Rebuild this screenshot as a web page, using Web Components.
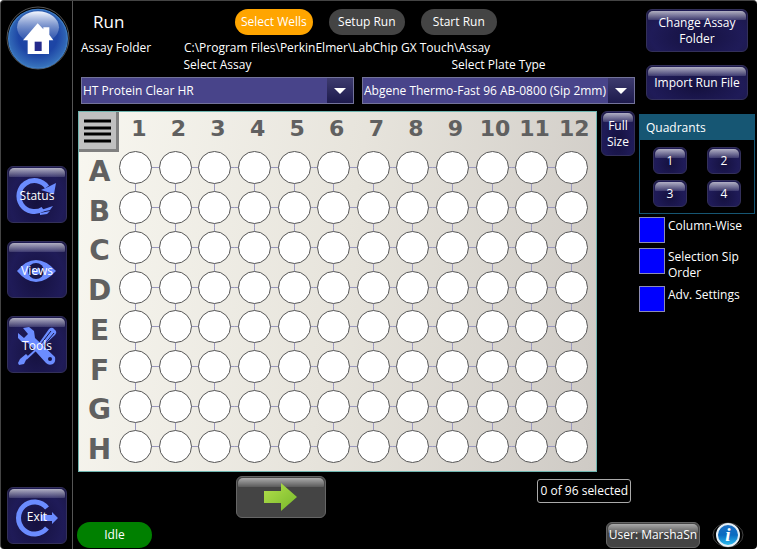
<!DOCTYPE html>
<html lang="en">
<head>
<meta charset="utf-8">
<title>Run</title>
<style>
  body {
    margin: 0;
    background: #fff;
    color: #fff;
    font: 12px/16px "Open Sans", "Noto Sans", sans-serif;
  }
</style>
</head>
<body>
<run-screen></run-screen>

<script>
// Small base class, every element only brings its own markup
class BaseElement extends HTMLElement {
  constructor() {
    super();
    this.attachShadow({ mode: 'open' });
  }

  connectedCallback() {
    this.shadowRoot.innerHTML = this.template();
  }
}

class GlossButton extends BaseElement {
  template() {
    const label = this.getAttribute('label');
    return `
      <style>
        :host { display: block; }
        button {
          display: grid;
          grid-template-rows: 100%;
          place-items: center;
          box-sizing: border-box;
          width: 100%;
          height: 100%;
          padding: 0;
          border: 1px solid #33305a;
          border-radius: 6px;
          background: radial-gradient(ellipse at 50% 65%, #15113f, #1f1b58 65%, #1b1845);
          color: inherit;
          font: inherit;
          text-align: center;
        }
        /* shine along the top edge, behind the face */
        button::before {
          content: "";
          grid-area: 1 / 1;
          place-self: start stretch;
          height: 9px;
          margin: 1px 1px 0;
          border-radius: 5px 5px 1px 1px;
          background: linear-gradient(rgba(255, 255, 255, 0.65), rgba(190, 190, 220, 0.2));
        }
        .face {
          grid-area: 1 / 1;
          z-index: 1;
        }
        :host([tone="gray"]) button {
          border-color: #666;
          background: #444;
        }
        :host([tone="gray"]) button::before {
          background: linear-gradient(rgba(255, 255, 255, 0.55), rgba(255, 255, 255, 0.12));
        }
      </style>
      <button type="button" ${label ? `aria-label="${label}"` : ''}><span class="face"><slot></slot></span></button>
    `;
  }
}
customElements.define('gloss-button', GlossButton);

const NAV_ICONS = {
  status: `
    <path d="M40 20A15.500 15.500 0 1 0 36 42" fill="none" stroke="#6b8cff" stroke-width="5"/>
    <path d="M49 16L47 27L34 23L41 20Z" fill="#6b8cff"/>
    <path d="M34 43L46 39L43 43L34 45ZM33 46L43 44L40 47L33 48Z" fill="#6b8cff"/>`,
  views: `
    <path d="M10 29Q19 18 29 18T49 29Q39 40 29 40T10 29Z" fill="#6b8cff"/>
    <circle cx="29" cy="29" r="8" fill="#171447"/>
    <circle cx="29" cy="29" r="4" fill="#6b8cff"/>
    <path d="M29 29L24 24L32 23Z" fill="#171447"/>`,
  tools: `
    <path d="M32 26L42 12Q44 10 46 11L49 14Q50 16 48 18L35 30Z" fill="#6b8cff"/>
    <path d="M34 27L44 14M37 28L47 16" stroke="#171447" stroke-width="1"/>
    <path d="M33 29L19 42" stroke="#6b8cff" stroke-width="2"/>
    <path d="M21 39L17 47L12 48L11 46L13 42L19 37Z" fill="#6b8cff"/>
    <path d="M16 11L22 10L27 14L28 21L48 40Q49 45 46 47Q42 49 39 46L21 26L15 25L11 21L11 16L17 21L21 17Z" fill="#6b8cff"/>
    <circle cx="43" cy="42" r="2" fill="#171447"/>`,
  exit: `
    <path d="M40 20A16 16 0 1 0 40 40" fill="none" stroke="#6b8cff" stroke-width="5"/>
    <path d="M34 27H45V24L51 30L45 36V33H34Z" fill="#6b8cff"/>`
};

class NavButton extends BaseElement {
  template() {
    return `
      <style>
        :host { display: block; }
        gloss-button {
          width: 60px;
          height: 57px;
        }
        .stack {
          display: grid;
          place-items: center;
        }
        .stack > * { grid-area: 1 / 1; }
        .text { padding-top: 2px; }
        svg { display: block; }
      </style>
      <gloss-button>
        <span class="stack">
          <svg width="58" height="55" viewBox="1 0 58 55" aria-hidden="true">${NAV_ICONS[this.getAttribute('icon')]}</svg>
          <span class="text"><slot></slot></span>
        </span>
      </gloss-button>
    `;
  }
}
customElements.define('nav-button', NavButton);

class SideBar extends BaseElement {
  template() {
    return `
      <style>
        :host { display: block; }
        nav {
          display: flex;
          flex-direction: column;
          gap: 18px;
          box-sizing: border-box;
          height: 100%;
          padding: 5px 4px 5px 6px;
          border-right: 1px solid #555;
        }
        .home {
          align-self: center;
          margin-bottom: 78px;
          padding: 0;
          border: 0;
          background: none;
        }
        svg { display: block; }
        .last { margin-top: auto; }
      </style>
      <nav>
        <button class="home" type="button" aria-label="Home">
          <svg width="64" height="64" viewBox="10 18 192 192" aria-hidden="true">
            <defs>
              <linearGradient id="gloss" x1="0" y1="0" x2="0" y2="1">
                <stop offset="0" stop-color="#f4f7ff"/>
                <stop offset="1" stop-color="#4469b8" stop-opacity="0.300"/>
              </linearGradient>
              <radialGradient id="ball" cx="0.500" cy="0.450" r="0.550">
                <stop offset="0.600" stop-color="#1d45a5"/>
                <stop offset="1" stop-color="#3975bd"/>
              </radialGradient>
            </defs>
            <circle cx="106" cy="114" r="93" fill="#000" stroke="#555" stroke-width="3"/>
            <circle cx="106" cy="116" r="88" fill="url(#ball)" stroke="#3f7cc4" stroke-width="4"/>
            <ellipse cx="106" cy="82" rx="63" ry="48" fill="url(#gloss)"/>
            <path d="M105 70L122 88V82H140V104L152 121H139V162H75V121H61Z" fill="#fff"/>
            <path d="M96 125H117V153H96Z" fill="#242a8c"/>
          </svg>
        </button>
        <nav-button icon="status">Status</nav-button>
        <nav-button icon="views">Views</nav-button>
        <nav-button icon="tools">Tools</nav-button>
        <nav-button icon="exit" class="last">Exit</nav-button>
      </nav>
    `;
  }
}
customElements.define('side-bar', SideBar);

class RunHeader extends BaseElement {
  template() {
    return `
      <style>
        :host { display: block; }
        .bar {
          display: flex;
          align-items: center;
          gap: 16px;
        }
        h1 {
          box-sizing: border-box;
          width: 138px;
          margin: 0;
          padding-left: 12px;
          font-size: 17px;
          font-weight: 400;
          line-height: 24px;
        }
        .bar button {
          height: 26px;
          min-width: 76px;
          padding: 0 6px;
          border: 0;
          border-radius: 13px;
          background: #444;
          color: #fff;
          font: inherit;
        }
        .bar .active { background: #ffa500; }
        .folder {
          display: grid;
          grid-template-columns: 103px 1fr;
          margin-top: 5px;
        }
      </style>
      <div class="bar">
        <h1>Run</h1>
        <button type="button" class="active">Select Wells</button>
        <button type="button">Setup Run</button>
        <button type="button">Start Run</button>
      </div>
      <div class="folder">
        <span>Assay Folder</span>
        <span>C:\\Program Files\\PerkinElmer\\LabChip GX Touch\\Assay</span>
      </div>
    `;
  }
}
customElements.define('run-header', RunHeader);

class SelectField extends BaseElement {
  template() {
    return `
      <style>
        :host { display: block; }
        label {
          display: block;
          margin-bottom: 4px;
          text-align: center;
        }
        select {
          appearance: none;
          display: block;
          box-sizing: border-box;
          width: 100%;
          height: 27px;
          padding: 0 26px 0 1px;
          border: 1px solid #73739a;
          border-radius: 0;
          background:
            url('data:image/svg+xml,<svg xmlns="http://www.w3.org/2000/svg" width="12" height="6"><path d="M0 0H12L6 6Z" fill="white"/></svg>') right 7px center no-repeat,
            linear-gradient(#3d3b6e, #1d1a4c) right / 26px 100% no-repeat,
            #48448a;
          color: inherit;
          font: inherit;
        }
      </style>
      <label for="field">${this.getAttribute('label')}</label>
      <select id="field"><option>${this.getAttribute('value')}</option></select>
    `;
  }
}
customElements.define('select-field', SelectField);

class WellPlate extends BaseElement {
  template() {
    const columns = Array.from({ length: 12 }, (_, i) => i + 1);
    const rows = 'ABCDEFGH'.split('');
    return `
      <style>
        :host {
          display: grid;
          grid-template-columns: 37px repeat(12, 1fr);
          grid-template-rows: 36px repeat(8, minmax(36px, 1fr));
          box-sizing: border-box;
          padding: 0 5px 5px 0;
          border: 1px solid #6fb5b0;
          background: linear-gradient(100deg, #f8f7f0, #e7e4dc 50%, #cecac5);
          color: #606060;
          font: bold 22px/30px "DejaVu Sans", sans-serif;
        }
        .column {
          display: flex;
          justify-content: center;
          padding: 2px 0 0 6px;
        }
        .row {
          align-self: center;
          padding: 8px 0 0 4px;
          font-size: 28px;
          text-align: center;
        }
        .all {
          align-self: start;
          display: grid;
          place-items: center;
          width: 40px;
          height: 40px;
          padding: 0;
          border: solid #808080;
          border-width: 0 3px 3px 0;
          background: #c0c0c0;
        }
        .well {
          --h: center / 100% 1px;
          --v: center / 1px 100%;
          display: grid;
          place-items: center;
          background:
            linear-gradient(#9997bd, #9997bd) var(--h) no-repeat,
            linear-gradient(#9997bd, #9997bd) var(--v) no-repeat;
        }
        /* connecting lines stop at the outer wells */
        .first { --h: right / 50% 1px; }
        .last { --h: left / 50% 1px; }
        .top { --v: bottom / 1px 50%; }
        .bottom { --v: top / 1px 50%; }
        input {
          appearance: none;
          box-sizing: border-box;
          width: 33px;
          height: 33px;
          margin: 0;
          border: 1px solid #555;
          border-radius: 50%;
          background: #fff;
        }
        input:checked { background: #2a6bd8; }
      </style>
      <button class="all" type="button" aria-label="All wells">
        <svg width="27" height="24" viewBox="0 0 27 24" aria-hidden="true">
          <path d="M0 2H27M0 9H27M0 15H27M0 22H27" stroke="#000" stroke-width="3"/>
        </svg>
      </button>
      ${columns.map(c => `<div class="column">${c}</div>`).join('')}
      ${rows.map(r => `
        <div class="row">${r}</div>
        ${columns.map(c => `<div class="well ${this._edges(r, c)}"><input type="checkbox" aria-label="${r}${c}"></div>`).join('')}
      `).join('')}
    `;
  }

  _edges(row, column) {
    const edges = [];
    if (row === 'A') edges.push('top');
    if (row === 'H') edges.push('bottom');
    if (column === 1) edges.push('first');
    if (column === 12) edges.push('last');
    return edges.join(' ');
  }
}
customElements.define('well-plate', WellPlate);

class QuadrantPanel extends BaseElement {
  template() {
    return `
      <style>
        :host {
          display: block;
          border: 1px solid #165673;
        }
        h2 {
          margin: 0;
          padding: 0 6px;
          background: #165673;
          font-size: 12px;
          font-weight: 400;
          line-height: 25px;
        }
        .grid {
          display: grid;
          grid-template-columns: 34px 34px;
          grid-auto-rows: 27px;
          justify-content: center;
          gap: 6px 20px;
          padding: 7px 0 6px;
        }
      </style>
      <h2>Quadrants</h2>
      <div class="grid">
        <gloss-button>1</gloss-button>
        <gloss-button>2</gloss-button>
        <gloss-button>3</gloss-button>
        <gloss-button>4</gloss-button>
      </div>
    `;
  }
}
customElements.define('quadrant-panel', QuadrantPanel);

class CheckOption extends BaseElement {
  template() {
    return `
      <style>
        :host { display: block; }
        label {
          display: flex;
          align-items: flex-start;
          gap: 3px;
        }
        input {
          appearance: none;
          box-sizing: border-box;
          flex: none;
          width: 26px;
          height: 26px;
          margin: 0;
          border: 1px solid #8c8cb4;
          background: #00f;
        }
        span { padding-top: 1px; }
      </style>
      <label><input type="checkbox"><span><slot></slot></span></label>
    `;
  }
}
customElements.define('check-option', CheckOption);

class SidePanel extends BaseElement {
  template() {
    return `
      <style>
        :host { display: block; }
        .actions {
          display: grid;
          gap: 13px;
          padding: 0 7px;
        }
        .tall { height: 43px; }
        .short { height: 35px; }
        quadrant-panel { margin-top: 14px; }
        .options {
          display: grid;
          gap: 5px;
          margin-top: 3px;
        }
      </style>
      <div class="actions">
        <gloss-button class="tall">Change Assay<br>Folder</gloss-button>
        <gloss-button class="short">Import Run File</gloss-button>
      </div>
      <quadrant-panel></quadrant-panel>
      <div class="options">
        <check-option>Column-Wise</check-option>
        <check-option>Selection Sip<br>Order</check-option>
        <check-option>Adv. Settings</check-option>
      </div>
    `;
  }
}
customElements.define('side-panel', SidePanel);

class StatusBar extends BaseElement {
  template() {
    return `
      <style>
        :host {
          display: flex;
          align-items: center;
          gap: 12px;
          padding-right: 11px;
        }
        .state {
          min-width: 75px;
          border-radius: 13px;
          background: #008000;
          line-height: 26px;
          text-align: center;
        }
        gloss-button {
          width: 94px;
          height: 26px;
          margin-left: auto;
        }
        .info {
          padding: 0;
          border: 0;
          background: none;
        }
        svg { display: block; }
      </style>
      <span class="state">Idle</span>
      <gloss-button tone="gray">User: MarshaSn</gloss-button>
      <button class="info" type="button" aria-label="Info">
        <svg width="32" height="26" viewBox="0 0 32 26" aria-hidden="true">
          <defs>
            <linearGradient id="sky" x1="0" y1="0" x2="0" y2="1">
              <stop offset="0" stop-color="#1b6fc4"/>
              <stop offset="0.500" stop-color="#0a6bc0"/>
              <stop offset="1" stop-color="#2fc4f5"/>
            </linearGradient>
          </defs>
          <ellipse cx="16" cy="13" rx="15" ry="12" fill="#000" stroke="#444"/>
          <circle cx="16" cy="13" r="11" fill="url(#sky)" stroke="#e4eef5" stroke-width="2"/>
          <text x="16" y="19" fill="#fff" text-anchor="middle" font-family="Liberation Serif, serif" font-size="19" font-weight="bold" font-style="italic">i</text>
        </svg>
      </button>
    `;
  }
}
customElements.define('status-bar', StatusBar);

class RunScreen extends BaseElement {
  template() {
    return `
      <style>
        :host {
          display: grid;
          grid-template-columns: 72px 1fr;
          box-sizing: border-box;
          min-height: 100vh;
          border: solid #444;
          border-width: 1px 0 0 1px;
          border-radius: 4px;
          background: #000;
        }
        .content {
          display: flex;
          flex-direction: column;
          gap: 4px;
          padding: 8px 2px 1px 4px;
        }
        .columns {
          flex: 1;
          display: grid;
          grid-template-columns: 1fr 116px;
          gap: 4px;
        }
        main {
          display: flex;
          flex-direction: column;
          padding-left: 1px;
        }
        run-header, .fields { margin-left: 3px; }
        .fields {
          display: grid;
          grid-template-columns: 1fr 1fr;
          gap: 8px;
          margin-top: 1px;
        }
        .plate {
          flex: 1;
          display: grid;
          grid-template-columns: 1fr 34px;
          gap: 4px;
          margin-top: 7px;
        }
        .plate gloss-button { height: 45px; }
        .actions {
          display: flex;
          align-items: flex-start;
          justify-content: space-between;
          margin-top: 4px;
          padding: 0 4px 0 158px;
        }
        .next {
          width: 90px;
          height: 42px;
        }
        .count {
          margin-top: 3px;
          padding: 3px 2px;
          border: 1px solid #aaa;
          border-radius: 3px;
        }
        svg { display: block; }
      </style>
      <side-bar></side-bar>
      <div class="content">
        <div class="columns">
          <main>
            <run-header></run-header>
            <div class="fields">
              <select-field label="Select Assay" value="HT Protein Clear HR"></select-field>
              <select-field label="Select Plate Type" value="Abgene Thermo-Fast 96 AB-0800 (Sip 2mm)"></select-field>
            </div>
            <div class="plate">
              <well-plate></well-plate>
              <gloss-button>Full<br>Size</gloss-button>
            </div>
            <div class="actions">
              <gloss-button class="next" tone="gray" label="Next">
                <svg width="36" height="30" viewBox="0 0 36 30" aria-hidden="true">
                  <defs>
                    <linearGradient id="leaf" x1="0" y1="0" x2="1" y2="1">
                      <stop offset="0" stop-color="#b4e04c"/>
                      <stop offset="1" stop-color="#76b82a"/>
                    </linearGradient>
                  </defs>
                  <path d="M1 9H18V1L34 15L18 29V21H1Z" fill="url(#leaf)"/>
                </svg>
              </gloss-button>
              <output class="count">0 of 96 selected</output>
            </div>
          </main>
          <side-panel></side-panel>
        </div>
        <status-bar></status-bar>
      </div>
    `;
  }
}
customElements.define('run-screen', RunScreen);
</script>
</body>
</html>
